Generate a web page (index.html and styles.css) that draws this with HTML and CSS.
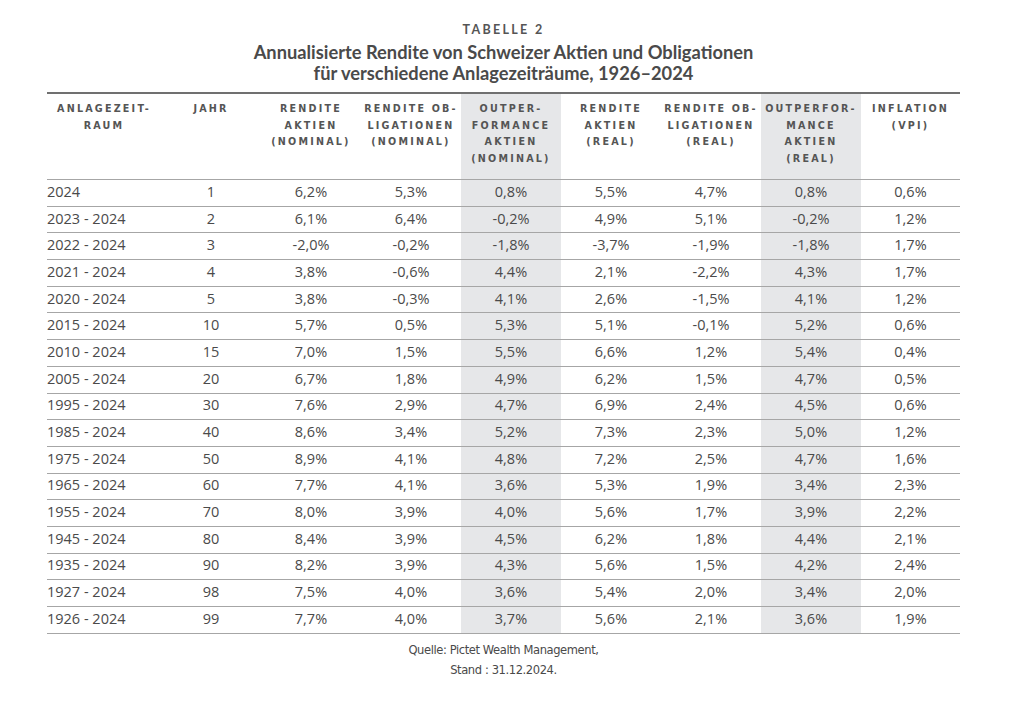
FILE: index.html
```html
<!DOCTYPE html>
<html lang="de">
<head>
<meta charset="utf-8">
<title>Tabelle 2</title>
<link rel="stylesheet" href="styles.css">
</head>
<body>
<div class="page">
  <div class="kicker">TABELLE 2</div>
  <h1 class="title">Annualisierte Rendite von Schweizer Aktien und Obligationen<br>für verschiedene Anlagezeiträume, 1926–2024</h1>
  <table class="data">
    <colgroup>
      <col class="c-first">
      <col class="c-std">
      <col class="c-std">
      <col class="c-std">
      <col class="c-std shade">
      <col class="c-std">
      <col class="c-std">
      <col class="c-std shade">
      <col class="c-last">
    </colgroup>
    <thead>
      <tr>
        <th>ANLAGEZEIT-<br>RAUM</th>
        <th>JAHR</th>
        <th>RENDITE<br>AKTIEN<br>(NOMINAL)</th>
        <th>RENDITE OB-<br>LIGATIONEN<br>(NOMINAL)</th>
        <th class="sh">OUTPER-<br>FORMANCE<br>AKTIEN<br>(NOMINAL)</th>
        <th>RENDITE<br>AKTIEN<br>(REAL)</th>
        <th>RENDITE OB-<br>LIGATIONEN<br>(REAL)</th>
        <th class="sh">OUTPERFOR-<br>MANCE<br>AKTIEN<br>(REAL)</th>
        <th>INFLATION<br>(VPI)</th>
      </tr>
    </thead>
    <tbody>
      <tr><td>2024</td><td>1</td><td>6,2%</td><td>5,3%</td><td class="sh">0,8%</td><td>5,5%</td><td>4,7%</td><td class="sh">0,8%</td><td>0,6%</td></tr>
      <tr><td>2023 - 2024</td><td>2</td><td>6,1%</td><td>6,4%</td><td class="sh">-0,2%</td><td>4,9%</td><td>5,1%</td><td class="sh">-0,2%</td><td>1,2%</td></tr>
      <tr><td>2022 - 2024</td><td>3</td><td>-2,0%</td><td>-0,2%</td><td class="sh">-1,8%</td><td>-3,7%</td><td>-1,9%</td><td class="sh">-1,8%</td><td>1,7%</td></tr>
      <tr><td>2021 - 2024</td><td>4</td><td>3,8%</td><td>-0,6%</td><td class="sh">4,4%</td><td>2,1%</td><td>-2,2%</td><td class="sh">4,3%</td><td>1,7%</td></tr>
      <tr><td>2020 - 2024</td><td>5</td><td>3,8%</td><td>-0,3%</td><td class="sh">4,1%</td><td>2,6%</td><td>-1,5%</td><td class="sh">4,1%</td><td>1,2%</td></tr>
      <tr><td>2015 - 2024</td><td>10</td><td>5,7%</td><td>0,5%</td><td class="sh">5,3%</td><td>5,1%</td><td>-0,1%</td><td class="sh">5,2%</td><td>0,6%</td></tr>
      <tr><td>2010 - 2024</td><td>15</td><td>7,0%</td><td>1,5%</td><td class="sh">5,5%</td><td>6,6%</td><td>1,2%</td><td class="sh">5,4%</td><td>0,4%</td></tr>
      <tr><td>2005 - 2024</td><td>20</td><td>6,7%</td><td>1,8%</td><td class="sh">4,9%</td><td>6,2%</td><td>1,5%</td><td class="sh">4,7%</td><td>0,5%</td></tr>
      <tr><td>1995 - 2024</td><td>30</td><td>7,6%</td><td>2,9%</td><td class="sh">4,7%</td><td>6,9%</td><td>2,4%</td><td class="sh">4,5%</td><td>0,6%</td></tr>
      <tr><td>1985 - 2024</td><td>40</td><td>8,6%</td><td>3,4%</td><td class="sh">5,2%</td><td>7,3%</td><td>2,3%</td><td class="sh">5,0%</td><td>1,2%</td></tr>
      <tr><td>1975 - 2024</td><td>50</td><td>8,9%</td><td>4,1%</td><td class="sh">4,8%</td><td>7,2%</td><td>2,5%</td><td class="sh">4,7%</td><td>1,6%</td></tr>
      <tr><td>1965 - 2024</td><td>60</td><td>7,7%</td><td>4,1%</td><td class="sh">3,6%</td><td>5,3%</td><td>1,9%</td><td class="sh">3,4%</td><td>2,3%</td></tr>
      <tr><td>1955 - 2024</td><td>70</td><td>8,0%</td><td>3,9%</td><td class="sh">4,0%</td><td>5,6%</td><td>1,7%</td><td class="sh">3,9%</td><td>2,2%</td></tr>
      <tr><td>1945 - 2024</td><td>80</td><td>8,4%</td><td>3,9%</td><td class="sh">4,5%</td><td>6,2%</td><td>1,8%</td><td class="sh">4,4%</td><td>2,1%</td></tr>
      <tr><td>1935 - 2024</td><td>90</td><td>8,2%</td><td>3,9%</td><td class="sh">4,3%</td><td>5,6%</td><td>1,5%</td><td class="sh">4,2%</td><td>2,4%</td></tr>
      <tr><td>1927 - 2024</td><td>98</td><td>7,5%</td><td>4,0%</td><td class="sh">3,6%</td><td>5,4%</td><td>2,0%</td><td class="sh">3,4%</td><td>2,0%</td></tr>
      <tr><td>1926 - 2024</td><td>99</td><td>7,7%</td><td>4,0%</td><td class="sh">3,7%</td><td>5,6%</td><td>2,1%</td><td class="sh">3,6%</td><td>1,9%</td></tr>
    </tbody>
  </table>
  <p class="source">Quelle: Pictet Wealth Management,<br>Stand : 31.12.2024.</p>
</div>
</body>
</html>
```

FILE: styles.css
```css
html, body {
  margin: 0;
  padding: 0;
  background: #ffffff;
}

.page {
  width: 913px;
  margin-left: 47px;
  padding-top: 22px;
  color: #4a4a4a;
}

.kicker {
  text-align: center;
  font-family: "Lato", "Open Sans", sans-serif;
  font-weight: 700;
  font-size: 12.5px;
  letter-spacing: 2.3px;
  line-height: 16px;
  color: #555555;
}

.title {
  margin: 3.5px 0 0 0;
  text-align: center;
  font-family: "Lato", "Open Sans", sans-serif;
  font-weight: 700;
  font-size: 18.3px;
  line-height: 21px;
  color: #4a4a4a;
}

.data {
  margin-top: 8.5px;
  width: 913px;
  border-collapse: collapse;
  table-layout: fixed;
  border-top: 2px solid #707070;
  border-bottom: 1px solid #a6a6a6;
}

.c-first { width: 114px; }
.c-std { width: 100px; }
.c-last { width: 99px; }

.data th {
  vertical-align: top;
  text-align: center;
  padding: 7px 0 0 0;
  height: 78px;
  font-family: "DejaVu Sans", "Open Sans", sans-serif;
  font-weight: 700;
  font-size: 9.6px;
  letter-spacing: 2.2px;
  line-height: 16.7px;
  color: #555555;
  border-bottom: 1px solid #a6a6a6;
  white-space: nowrap;
}

.data td {
  height: 22.7px;
  padding: 0 0 3px 0;
  text-align: center;
  font-family: "Open Sans", "Noto Sans", sans-serif;
  font-size: 14.5px;
  color: #4a4a4a;
  border-bottom: 1px solid #a6a6a6;
  white-space: nowrap;
}

.data td:first-child {
  text-align: left;
}

.data .sh {
  background: #e6e7e9;
}

.source {
  margin: 6px 0 0 0;
  text-align: center;
  font-family: "Liberation Sans Narrow", "DejaVu Sans Condensed", sans-serif;
  font-size: 12.8px;
  letter-spacing: -0.4px;
  line-height: 20px;
  color: #4a4a4a;
}
```
